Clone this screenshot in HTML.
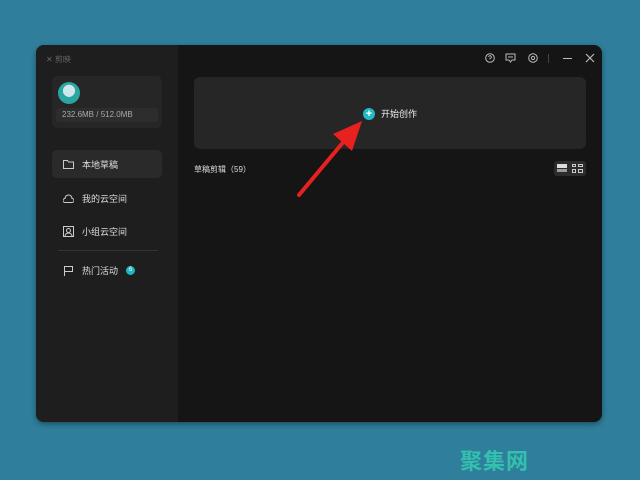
<!DOCTYPE html><html><head><meta charset="utf-8"><style>
*{margin:0;padding:0;box-sizing:border-box}
body{width:640px;height:480px;background:#2f7f9c;position:relative;overflow:hidden;font-family:"Liberation Sans","Noto Sans CJK SC",sans-serif;color:#ddd;font-size:9px}
.win{position:absolute;left:36px;top:45px;width:566px;height:377px;background:#151515;border-radius:8px;overflow:hidden;box-shadow:0 2px 6px rgba(0,0,0,.4)}
.side{position:absolute;left:0;top:0;width:142px;height:100%;background:#1e1e1e}
.abs{position:absolute}
.item{position:absolute;left:16px;width:110px;height:28px;border-radius:5px;display:flex;align-items:center;padding-left:11px;gap:8px;color:#ddd}
</style></head><body>
<div class="win">
<div class="side">
<div class="abs" style="left:10px;top:9px;color:#666;font-size:8px">✕ 剪映</div>
<div class="abs" style="left:16px;top:31px;width:110px;height:52px;background:#262626;border-radius:6px">
<div class="abs" style="left:6px;top:6px;width:22px;height:22px;border-radius:50%;background:radial-gradient(circle at 50% 40%,#cfe6ea 0 35%,#29a6a0 36%)"></div>
<div class="abs" style="left:4px;top:32px;width:102px;height:14px;background:#2d2d2d;border-radius:3px"></div>
<div class="abs" style="left:10px;top:34px;color:#aaa;font-size:8px">232.6MB / 512.0MB</div>
</div>
<div class="item" style="top:105px;background:#2a2a2a"><svg width="11" height="9"><path d="M.5 .5h4l1 1.5h5v6.5h-10z" fill="none" stroke="#ccc"/></svg>本地草稿</div>
<div class="item" style="top:139px"><svg width="11" height="9"><path d="M2 8.5a2 2 0 0 1 0-4a3.5 3.5 0 0 1 7 0a2 2 0 0 1 0 4z" fill="none" stroke="#ccc"/></svg>我的云空间</div>
<div class="item" style="top:172px"><svg width="11" height="11"><rect x=".5" y=".5" width="10" height="10" fill="none" stroke="#ccc"/><circle cx="5.5" cy="4.5" r="2" fill="none" stroke="#ccc"/><path d="M2 10a3.5 3 0 0 1 7 0" fill="none" stroke="#ccc"/></svg>小组云空间</div>
<div class="abs" style="left:22px;top:205px;width:100px;height:1px;background:#333"></div>
<div class="item" style="top:211px"><svg width="11" height="11"><path d="M1.5 11V1.5h8v5h-8" fill="none" stroke="#ccc"/></svg>热门活动<span style="width:9px;height:9px;border-radius:50%;background:#1fb7c5;font-size:6px;color:#fff;text-align:center;line-height:9px">6</span></div>
</div>
<svg class="abs" style="left:448px;top:7px" width="62" height="12"><circle cx="6" cy="6" r="4.3" fill="none" stroke="#bbb"/><path d="M4.7 5a1.3 1.3 0 1 1 1.3 1.3v1" fill="none" stroke="#bbb" stroke-width=".9"/><path d="M22 2h9v6h-3l-1.5 2l-1.5-2h-3z M24 5h5" fill="none" stroke="#bbb"/><circle cx="49" cy="6" r="4.3" fill="none" stroke="#bbb"/><circle cx="49" cy="6" r="1.6" fill="none" stroke="#bbb"/></svg>
<div class="abs" style="left:512px;top:9px;width:1px;height:9px;background:#444"></div>
<div class="abs" style="left:527px;top:13px;width:9px;height:1px;background:#bbb"></div>
<svg class="abs" style="left:549px;top:8px" width="10" height="10"><path d="M1 1l8 8M9 1l-8 8" stroke="#bbb" stroke-width="1.2"/></svg>
<div class="abs" style="left:158px;top:32px;width:392px;height:72px;background:#262626;border-radius:6px"></div>
<div class="abs" style="left:327px;top:63px;width:12px;height:12px;border-radius:50%;background:#22b8c6;color:#fff;font-size:11px;line-height:12px;text-align:center;font-weight:bold">+</div>
<div class="abs" style="left:345px;top:62px;font-size:9px;color:#eee">开始创作</div>
<div class="abs" style="left:158px;top:119px;font-size:8px;color:#ddd">草稿剪辑（59）</div>
<div class="abs" style="left:518px;top:116px;width:32px;height:15px;background:#2c2c2c;border-radius:3px"></div>
<div class="abs" style="left:521px;top:119px;width:10px;height:4px;background:#ddd"></div>
<div class="abs" style="left:521px;top:124px;width:10px;height:3px;background:#999"></div>
<div class="abs" style="left:536px;top:119px;width:4px;height:3px;border:1px solid #ccc"></div>
<div class="abs" style="left:542px;top:119px;width:5px;height:3px;border:1px solid #ccc"></div>
<div class="abs" style="left:536px;top:124px;width:4px;height:4px;border:1px solid #ccc"></div>
<div class="abs" style="left:542px;top:124px;width:5px;height:4px;border:1px solid #ccc"></div>
</div>
<svg class="abs" style="left:0;top:0" width="640" height="480"><line x1="299" y1="195" x2="345" y2="140" stroke="#e8211e" stroke-width="4" stroke-linecap="round"/><path d="M362 121L333 134L352 151Z" fill="#e8211e"/></svg>
<div class="abs" style="left:460px;top:444px;font-size:22px;font-weight:bold;color:#33c1ae;letter-spacing:1px">聚集网</div>
</body></html>
